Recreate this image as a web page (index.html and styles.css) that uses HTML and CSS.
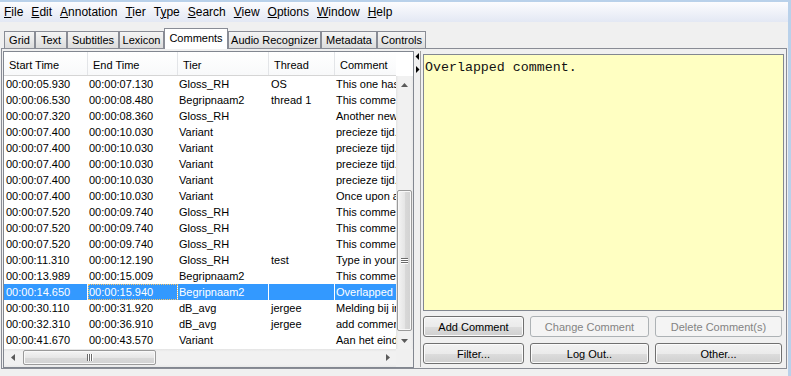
FILE: index.html
```html
<!DOCTYPE html>
<html>
<head>
<meta charset="utf-8">
<link rel="stylesheet" href="styles.css">
</head>
<body>
<div class="window">
  <div class="menubar">
    <span class="menu"><u>F</u>ile</span>
    <span class="menu"><u>E</u>dit</span>
    <span class="menu"><u>A</u>nnotation</span>
    <span class="menu"><u>T</u>ier</span>
    <span class="menu">T<u>y</u>pe</span>
    <span class="menu"><u>S</u>earch</span>
    <span class="menu"><u>V</u>iew</span>
    <span class="menu"><u>O</u>ptions</span>
    <span class="menu"><u>W</u>indow</span>
    <span class="menu"><u>H</u>elp</span>
  </div>
  <div class="tabs">
    <div class="tab tab-grid">Grid</div>
    <div class="tab tab-text">Text</div>
    <div class="tab tab-subtitles">Subtitles</div>
    <div class="tab tab-lexicon">Lexicon</div>
    <div class="tab tab-comments active">Comments</div>
    <div class="tab tab-audio">Audio Recognizer</div>
    <div class="tab tab-metadata">Metadata</div>
    <div class="tab tab-controls">Controls</div>
  </div>
  <div class="pane">
    <div class="table-wrap">
      <div class="header">
        <div class="hcell c1">Start Time</div>
        <div class="hcell c2">End Time</div>
        <div class="hcell c3">Tier</div>
        <div class="hcell c4">Thread</div>
        <div class="hcell c5">Comment</div>
      </div>
      <div class="corner-top"></div>
      <div class="viewport">
        <div class="row"><div class="cell c1">00:00:05.930</div><div class="cell c2">00:00:07.130</div><div class="cell c3">Gloss_RH</div><div class="cell c4">OS</div><div class="cell c5">This one has a thread</div></div>
        <div class="row"><div class="cell c1">00:00:06.530</div><div class="cell c2">00:00:08.480</div><div class="cell c3">Begripnaam2</div><div class="cell c4">thread 1</div><div class="cell c5">This comment is part of a thread</div></div>
        <div class="row"><div class="cell c1">00:00:07.320</div><div class="cell c2">00:00:08.360</div><div class="cell c3">Gloss_RH</div><div class="cell c4"></div><div class="cell c5">Another new comment</div></div>
        <div class="row"><div class="cell c1">00:00:07.400</div><div class="cell c2">00:00:10.030</div><div class="cell c3">Variant</div><div class="cell c4"></div><div class="cell c5">precieze tijd...</div></div>
        <div class="row"><div class="cell c1">00:00:07.400</div><div class="cell c2">00:00:10.030</div><div class="cell c3">Variant</div><div class="cell c4"></div><div class="cell c5">precieze tijd...</div></div>
        <div class="row"><div class="cell c1">00:00:07.400</div><div class="cell c2">00:00:10.030</div><div class="cell c3">Variant</div><div class="cell c4"></div><div class="cell c5">precieze tijd...</div></div>
        <div class="row"><div class="cell c1">00:00:07.400</div><div class="cell c2">00:00:10.030</div><div class="cell c3">Variant</div><div class="cell c4"></div><div class="cell c5">precieze tijd...</div></div>
        <div class="row"><div class="cell c1">00:00:07.400</div><div class="cell c2">00:00:10.030</div><div class="cell c3">Variant</div><div class="cell c4"></div><div class="cell c5">Once upon a time</div></div>
        <div class="row"><div class="cell c1">00:00:07.520</div><div class="cell c2">00:00:09.740</div><div class="cell c3">Gloss_RH</div><div class="cell c4"></div><div class="cell c5">This comment is new</div></div>
        <div class="row"><div class="cell c1">00:00:07.520</div><div class="cell c2">00:00:09.740</div><div class="cell c3">Gloss_RH</div><div class="cell c4"></div><div class="cell c5">This comment is new</div></div>
        <div class="row"><div class="cell c1">00:00:07.520</div><div class="cell c2">00:00:09.740</div><div class="cell c3">Gloss_RH</div><div class="cell c4"></div><div class="cell c5">This comment is new</div></div>
        <div class="row"><div class="cell c1">00:00:11.310</div><div class="cell c2">00:00:12.190</div><div class="cell c3">Gloss_RH</div><div class="cell c4">test</div><div class="cell c5">Type in your comment</div></div>
        <div class="row"><div class="cell c1">00:00:13.989</div><div class="cell c2">00:00:15.009</div><div class="cell c3">Begripnaam2</div><div class="cell c4"></div><div class="cell c5">This comment overlaps</div></div>
        <div class="row selected"><div class="cell c1">00:00:14.650</div><div class="cell c2 focus">00:00:15.940</div><div class="cell c3">Begripnaam2</div><div class="cell c4"></div><div class="cell c5">Overlapped comment.</div></div>
        <div class="row"><div class="cell c1">00:00:30.110</div><div class="cell c2">00:00:31.920</div><div class="cell c3">dB_avg</div><div class="cell c4">jergee</div><div class="cell c5">Melding bij interval</div></div>
        <div class="row"><div class="cell c1">00:00:32.310</div><div class="cell c2">00:00:36.910</div><div class="cell c3">dB_avg</div><div class="cell c4">jergee</div><div class="cell c5">add comment here</div></div>
        <div class="row"><div class="cell c1">00:00:41.670</div><div class="cell c2">00:00:43.570</div><div class="cell c3">Variant</div><div class="cell c4"></div><div class="cell c5">Aan het einde</div></div>
      </div>
      <div class="vscroll">
        <div class="sbtn"><svg width="7" height="4" viewBox="0 0 7 4"><polygon points="0,4 3.5,0 7,4" fill="#5a5a5a"/></svg></div>
        <div class="vtrack"><div class="vthumb"><span class="grip-h"></span><span class="grip-h"></span><span class="grip-h"></span></div></div>
        <div class="sbtn"><svg width="7" height="4" viewBox="0 0 7 4"><polygon points="0,0 7,0 3.5,4" fill="#5a5a5a"/></svg></div>
      </div>
      <div class="hscroll">
        <div class="sbtn"><svg width="4" height="7" viewBox="0 0 4 7"><polygon points="4,0 0,3.5 4,7" fill="#5a5a5a"/></svg></div>
        <div class="htrack"><div class="hthumb"><span class="grip-v"></span><span class="grip-v"></span><span class="grip-v"></span></div></div>
        <div class="sbtn"><svg width="4" height="7" viewBox="0 0 4 7"><polygon points="0,0 4,3.5 0,7" fill="#5a5a5a"/></svg></div>
      </div>
      <div class="corner-bottom"></div>
    </div>
    <div class="divider">
      <svg width="5" height="22" viewBox="0 0 5 22"><polygon points="4,0 0.5,3.5 4,7" fill="#000"/><polygon points="1,13 4.5,16.5 1,20" fill="#000"/></svg>
    </div>
    <div class="right">
      <div class="textarea">Overlapped comment.</div>
      <div class="buttons">
        <div class="btn">Add Comment</div>
        <div class="btn disabled">Change Comment</div>
        <div class="btn disabled">Delete Comment(s)</div>
        <div class="btn">Filter...</div>
        <div class="btn">Log Out..</div>
        <div class="btn">Other...</div>
      </div>
    </div>
  </div>
</div>
</body>
</html>
```
FILE: styles.css
```css
* { box-sizing: border-box; }
html, body {
  margin: 0;
  padding: 0;
}
body {
  width: 791px;
  height: 376px;
  overflow: hidden;
  background: #b9d1ea;
  font-family: "Liberation Sans", Arial, sans-serif;
  font-size: 11px;
  color: #000;
}
.window {
  width: 788px;
  height: 374px;
  margin-top: 2px;
  background: #f0f0f0;
  display: flex;
  flex-direction: column;
}
.menubar {
  height: 20px;
  display: flex;
  align-items: center;
  gap: 8px;
  padding-left: 4px;
  font-size: 12px;
  background: linear-gradient(#fcfcfe, #e3e8f4);
}
.menu u { text-decoration-thickness: 1px; text-underline-offset: 1px; }

.tabs {
  margin-top: 6px;
  height: 20px;
  display: flex;
  align-items: flex-end;
  padding-left: 4px;
  position: relative;
  z-index: 1;
}
.tab {
  flex: none;
  height: 17px;
  line-height: 16px;
  text-align: center;
  border: 1px solid #898c95;
  border-bottom: none;
  background: linear-gradient(#f4f4f4, #e9e9e9 50%, #dcdcdc);
  white-space: nowrap;
}
.tab-grid { width: 31px; }
.tab-text { width: 32px; }
.tab-subtitles { width: 52px; }
.tab-lexicon { width: 45px; }
.tab-comments { width: 64px; }
.tab-audio { width: 93px; }
.tab-metadata { width: 56px; }
.tab-controls { width: 49px; }
.tab.active {
  height: 21px;
  line-height: 18px;
  background: #fff;
  margin-bottom: -1px;
}

.pane {
  margin-left: 1px;
  width: 786px;
  height: 321px;
  border: 1px solid #898c95;
  padding: 2px 1px 1px 1px;
  display: flex;
}

.table-wrap {
  width: 411px;
  height: 317px;
  border: 1px solid #828790;
  display: grid;
  grid-template-columns: 392px 17px;
  grid-template-rows: 24px 273px 18px;
  background: #fff;
}
.header {
  display: flex;
  background: linear-gradient(#fff, #f8f9fa);
  border-bottom: 1px solid #d5d5d5;
  overflow: hidden;
}
.hcell {
  flex: none;
  height: 23px;
  padding: 5px 0 0 5px;
  line-height: 17px;
  border-right: 1px solid #e3e5e8;
  white-space: nowrap;
}
.c1 { width: 84px; }
.c2 { width: 90px; }
.c3 { width: 91px; }
.c4 { width: 66px; }
.c5 { width: 260px; }
.corner-top { background: #fff; }
.viewport { overflow: hidden; background: #fff; }
.row { display: flex; height: 16px; }
.cell {
  flex: none;
  height: 16px;
  line-height: 16px;
  padding-left: 1px;
  border-right: 1px solid #fff;
  white-space: nowrap;
  overflow: hidden;
}
.row .c1 { padding-left: 2px; }
.row .c4 { padding-left: 2px; }
.row.selected { background: #3399ff; color: #fff; }
.cell.focus { outline: 1px dotted #f4c26b; outline-offset: -1px; }

.vscroll {
  display: flex;
  flex-direction: column;
  background: linear-gradient(to right, #e4e4e4, #f1f1f1 15%, #f1f1f1 85%, #e9e9e9);
}
.sbtn {
  flex: none;
  width: 17px;
  height: 17px;
  display: flex;
  align-items: center;
  justify-content: center;
}
.vtrack {
  flex: 1;
  display: flex;
  flex-direction: column;
  justify-content: flex-end;
  padding: 0 1px 1px 1px;
}
.vthumb {
  height: 141px;
  border: 1px solid #9a9a9a;
  border-radius: 2px;
  background: linear-gradient(to right, #f4f4f4, #e6e6e6 50%, #d9d9d9 51%, #d2d2d2);
  box-shadow: inset 0 0 0 1px #f8f8f8;
  display: flex;
  flex-direction: column;
  align-items: center;
  justify-content: center;
  gap: 1px;
}
.grip-h { width: 7px; height: 1px; background: #6a6a6a; box-shadow: 0 1px 0 #fff; }

.hscroll {
  display: flex;
  background: linear-gradient(#e4e4e4, #f1f1f1 15%, #f1f1f1 85%, #e9e9e9);
}
.htrack {
  flex: 1;
  padding: 1px 0;
  padding-left: 2px;
}
.hthumb {
  width: 133px;
  height: 15px;
  border: 1px solid #9a9a9a;
  border-radius: 2px;
  background: linear-gradient(#f4f4f4, #e6e6e6 50%, #d9d9d9 51%, #d2d2d2);
  box-shadow: inset 0 0 0 1px #f8f8f8;
  display: flex;
  align-items: center;
  justify-content: center;
  gap: 1px;
}
.grip-v { width: 1px; height: 7px; background: #6a6a6a; box-shadow: 1px 0 0 #fff; }
.corner-bottom { background: #f0f0f0; }

.divider {
  width: 6px;
  flex: none;
  padding: 2px 0 0 1px;
}
.divider svg { display: block; }

.right {
  flex: 1;
  border-left: 1px solid #a0a0a0;
  padding: 3px 1px 0 2px;
  display: flex;
  flex-direction: column;
}
.textarea {
  height: 257px;
  border: 1px solid #828790;
  background: #ffffc2;
  font-family: "Liberation Mono", "Courier New", monospace;
  font-size: 13.3px;
  line-height: 16px;
  padding: 5px 1px;
  color: #111;
}
.buttons {
  margin-top: 5px;
  display: grid;
  grid-template-columns: 101px 119px 127px;
  grid-auto-rows: 21px;
  column-gap: 6px;
  row-gap: 6px;
}
.btn {
  border: 1px solid #707070;
  border-radius: 3px;
  background: linear-gradient(#f2f2f2, #ebebeb 50%, #dddddd 51%, #cfcfcf);
  box-shadow: inset 0 0 0 1px #fbfbfb;
  display: flex;
  align-items: center;
  justify-content: center;
  white-space: nowrap;
}
.btn.disabled {
  border-color: #adb2b5;
  background: #f4f4f4;
  box-shadow: none;
  color: #838383;
}
```
